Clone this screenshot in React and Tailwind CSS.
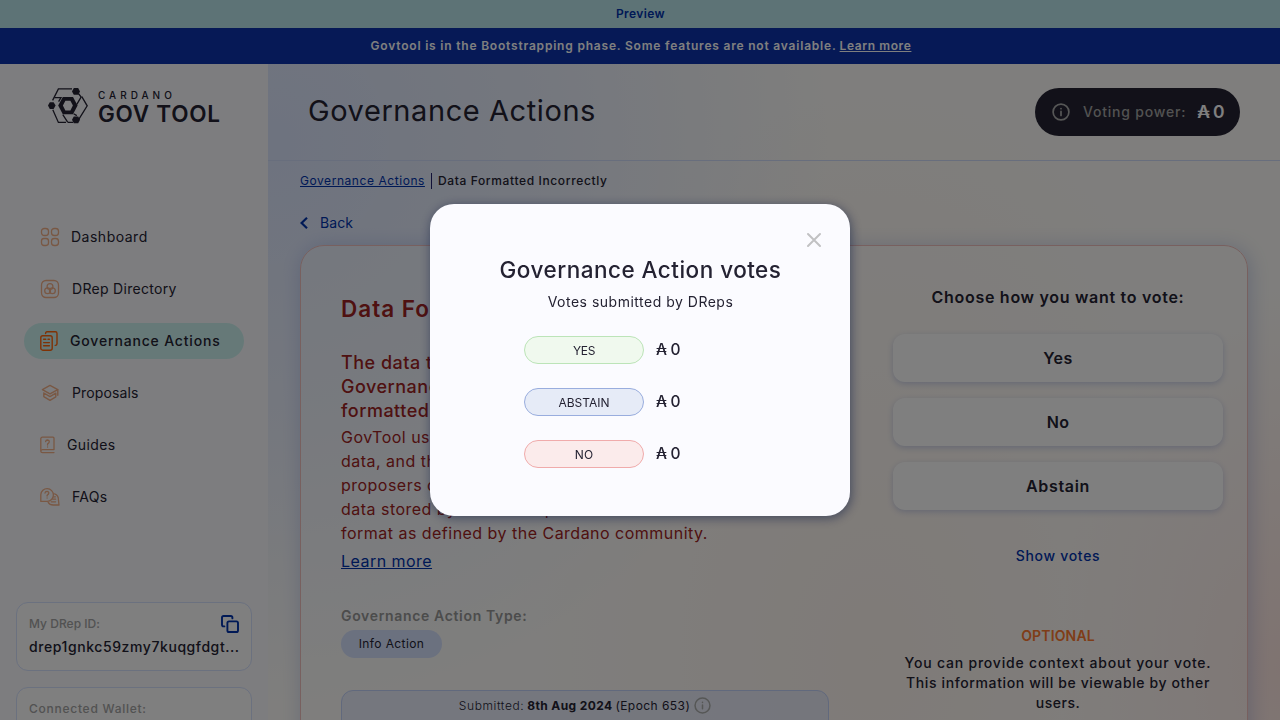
import React from "react";

const svgBase = { fill: "none", strokeLinecap: "round", strokeLinejoin: "round" };

function CardanoLogo() {
  return (
    <svg width="40" height="36" viewBox="0 0 40 36" className="mt-px shrink-0" fill="none" stroke="#242232" strokeWidth="1.3">
      <path d="M4.6 12.4 L10.4 0.9 H24" />
      <path d="M4.8 21.8 L10.4 34.4 H18 M20 34.4 H25" />
      <path d="M30.4 5.5 L33.2 9.2 M33.8 8.6 L39.2 17.8 L30.6 31.6" />
      <path d="M6.4 9.6 H13 L10.6 13.6 M33.2 8.8 L28.8 16.4 M14.8 26.6 L19.8 34.4" />
      <path d="M28.8 27.6 L25.6 25.8" />
      <polygon points="14.8,9 25,9 29.6,17.6 25,26.2 14.8,26.2 10.2,17.6" fill="#242232" stroke="none" />
      <polygon points="17.4,12.8 22.4,12.8 24.9,17.6 22.4,22.4 17.4,22.4 14.9,17.6" fill="#FBFBFF" stroke="none" />
      <polygon points="1.8,14.2 5.6,14.2 7.6,17.6 5.6,21 1.8,21 0,17.6" fill="#242232" stroke="none" />
      <polygon points="25.8,0 30.2,0 32,3.4 30.2,6.8 25.8,6.8 24,3.4" fill="#242232" stroke="none" />
      <polygon points="25.8,28.4 30.2,28.4 32,31.8 30.2,35.2 25.8,35.2 24,31.8" fill="#242232" stroke="none" />
    </svg>
  );
}

const faded = "#F2B088";

function DashboardIcon() {
  return (
    <svg width="20" height="20" viewBox="0 0 20 20" {...svgBase} stroke={faded} strokeWidth="1.3">
      <rect x="1.5" y="1.5" width="7" height="7" rx="2.8" />
      <rect x="11.5" y="1.5" width="7" height="7" rx="2.8" />
      <rect x="1.5" y="11.5" width="7" height="7" rx="2.4" />
      <rect x="11.5" y="11.5" width="7" height="7" rx="2.8" />
    </svg>
  );
}

function DirectoryIcon() {
  return (
    <svg width="20" height="20" viewBox="0 0 20 20" {...svgBase} stroke={faded} strokeWidth="1.3">
      <rect x="1.5" y="1.5" width="17" height="17" rx="4.5" />
      <circle cx="10" cy="7.6" r="2.9" />
      <circle cx="7.6" cy="11.8" r="2.9" />
      <circle cx="12.4" cy="11.8" r="2.9" />
    </svg>
  );
}

function ActionsIcon() {
  return (
    <svg width="18" height="20" viewBox="0 0 18 20" {...svgBase} stroke="#FF640A" strokeWidth="1.4">
      <rect x="0.8" y="4.8" width="11.4" height="14.4" rx="2" />
      <path d="M5.6 2.6 V2.2 Q5.6 0.8 7 0.8 H15.4 Q17 0.8 17 2.4 V12.8 Q17 14.4 15.2 14.4" />
      <path d="M3.6 8.2 H5.8 M8 8.2 H9.4 M3.6 11.6 H9.4 M3.6 14.8 H9.4" />
    </svg>
  );
}

function ProposalsIcon() {
  return (
    <svg width="20" height="20" viewBox="0 0 20 20" {...svgBase} stroke={faded} strokeWidth="1.4">
      <path d="M10 2.4 L17.8 6.6 L10 10.8 L2.4 6.6 Z" />
      <path d="M17.8 6.8 V12.2" />
      <path d="M3.8 10 L10 13.6 L15.8 10.2 M3.8 13.6 L10 17.3 L15.8 13.8 M3.8 10 V13.6 M15.8 10.2 V13.8" />
    </svg>
  );
}

function GuidesIcon() {
  return (
    <svg width="15" height="18" viewBox="0 0 15 18" {...svgBase} stroke={faded} strokeWidth="1.3">
      <path d="M14 13.6 V2.2 Q14 1.2 13 1.2 H2.4 Q0.8 1.2 0.8 2.8 V15 M14 13.6 H2.6 Q0.8 13.8 0.8 15.2 Q0.8 16.6 2.6 16.6 H14" />
      <path d="M5.6 5.6 Q5.8 4 7.5 4 Q9.4 4.2 9.3 5.8 Q9.2 7 7.6 7.8 V9 M7.6 11 V11.1" />
    </svg>
  );
}

function FaqsIcon() {
  return (
    <svg width="20" height="20" viewBox="0 0 20 20" {...svgBase} stroke={faded} strokeWidth="1.3">
      <path d="M0.8 14.4 V7.6 A6.3 6.4 0 1 1 7.2 14.4 Z" />
      <path d="M5 6 Q5.2 4.4 7 4.4 Q8.9 4.5 8.8 6.2 Q8.6 7.4 7.1 8.2 V9 M7.1 11 V11.1" />
      <path d="M14.6 6.8 A5.8 5.8 0 0 1 18.4 12.6 L19 18 H13.2 Q9.6 18 8.2 15.4 M13.6 9.8 H15.4 M12.8 12.2 H15.6 M11.2 14.8 H15.6" />
    </svg>
  );
}

function InfoIcon({ size, color, width }) {
  return (
    <svg width={size} height={size} viewBox="0 0 18 18" {...svgBase} stroke={color} strokeWidth={width} className="shrink-0">
      <circle cx="9" cy="9" r="7.9" />
      <path d="M9 8.4 V12.4 M9 5.6 V5.7" />
    </svg>
  );
}

const nav = [
  { label: "Dashboard", Icon: DashboardIcon, text: "pl-[11px] tracking-[0.5px]" },
  { label: "DRep Directory", Icon: DirectoryIcon, text: "pl-3 tracking-[0.3px]" },
  { label: "Governance Actions", Icon: ActionsIcon, text: "pl-3 font-medium tracking-[0.83px]", active: true },
  { label: "Proposals", Icon: ProposalsIcon, text: "pl-3 tracking-[0.12px]" },
  { label: "Guides", Icon: GuidesIcon, text: "pl-3 tracking-[0.4px]" },
  { label: "FAQs", Icon: FaqsIcon, text: "pl-3 tracking-[0.3px]" },
];

function Sidebar() {
  return (
    <aside className="flex w-[268px] shrink-0 flex-col bg-[#FBFBFF]">
      <div className="flex h-10 gap-[10px] pt-[23px] pl-12">
        <CardanoLogo />
        <div className="flex flex-col whitespace-nowrap">
          <span className="h-[15px] shrink-0 text-[10px] leading-4 font-medium tracking-[4px]">CARDANO</span>
          <span className="h-6 shrink-0 text-[22.5px] leading-6 font-semibold tracking-[0.75px]">GOV TOOL</span>
        </div>
      </div>
      <nav className="mt-[115px] flex flex-col gap-4 px-6">
        {nav.map(({ label, Icon, text, active }) => (
          <a key={label} className={`flex h-9 w-[220px] items-center rounded-full pl-4 text-sm whitespace-nowrap ${active ? "bg-[#CCF3F1]" : ""}`}>
            <Icon />
            <span className={text}>{label}</span>
          </a>
        ))}
      </nav>
      <div className="mt-[87px] flex flex-col gap-4 px-4">
        <div className="flex h-[69px] shrink-0 flex-col rounded-xl border border-[#D6E2FF] bg-[#FEFEFE] pt-3 pr-3 pl-3">
          <div className="flex h-5 justify-between">
            <span className="text-xs leading-[17px] font-medium tracking-[0.03px] text-[#A4A4A4]">My DRep ID:</span>
            <svg width="18" height="18" viewBox="0 0 18 18" {...svgBase} stroke="#0033AD" strokeWidth="1.9">
              <rect x="6.4" y="6.4" width="10.6" height="10.6" rx="1.6" />
              <path d="M3.4 11.4 H2.6 Q1 11.4 1 9.8 V2.6 Q1 1 2.6 1 H9.8 Q11.4 1 11.4 2.6 V3.4" />
            </svg>
          </div>
          <span className="mt-[2px] text-sm leading-5 font-medium tracking-[0.58px] whitespace-nowrap">drep1gnkc59zmy7kuqgfdgt...</span>
        </div>
        <div className="flex h-[69px] shrink-0 items-start rounded-xl border border-[#D6E2FF] bg-[#FEFEFE] px-3 pt-3">
          <span className="text-xs leading-[18px] font-medium tracking-[0.74px] text-[#A4A4A4]">Connected Wallet:</span>
        </div>
      </div>
    </aside>
  );
}

function VoteButton({ children, tracking }) {
  return (
    <button className={`h-12 w-full rounded-xl bg-white pb-px text-base font-semibold shadow-[0_2px_6px_0_rgba(0,51,173,0.2)] ${tracking}`}>
      {children}
    </button>
  );
}

function ActionCard() {
  return (
    <section className="flex h-[620px] shrink-0 rounded-3xl border border-[#F0C0BE] bg-[rgba(255,255,255,0.3)] shadow-[2px_2px_20px_0_rgba(0,51,173,0.2)]">
      <div className="flex w-[568px] shrink-0 flex-col items-start pt-12 pr-10 pl-10 text-[#9E2323]">
        <h2 className="text-[22.5px] leading-[30px] font-semibold tracking-[1px] whitespace-nowrap">Data Formatted Incorrectly</h2>
        <p className="mt-[27px] text-lg leading-6 font-medium tracking-[0.5px] whitespace-nowrap">
          The data that was originally used when this<br />
          Governance Action was created has been<br />
          formatted incorrectly.
        </p>
        <p className="mt-[2px] text-base leading-6 tracking-[0.48px] whitespace-nowrap">
          GovTool uses external sources for Governance Action<br />
          data, and these sources are maintained by the<br />
          proposers of the actions. This error means that the<br />
          data stored by the developer is not in the correct<br />
          format as defined by the Cardano community.
        </p>
        <a className="mt-1 text-base leading-6 tracking-[0.46px] text-[#0033AD] underline">Learn more</a>
        <div className="mt-[33px] text-sm leading-5 font-semibold tracking-[0.66px] text-[#989898]">Governance Action Type:</div>
        <div className="mt-1 flex h-7 w-[101px] items-center justify-center rounded-full bg-[#D6E2FF] text-xs tracking-[0.4px] whitespace-nowrap text-[#242232]">
          Info Action
        </div>
        <div className="mt-8 flex h-[120px] w-[488px] shrink-0 items-start justify-center rounded-xl border border-[#C3D2FA] bg-[rgba(214,226,255,0.5)] pt-1.5 text-xs leading-[18px] whitespace-nowrap text-[#242232]">
          <span className="pr-[3px] font-light tracking-[0.6px]">Submitted:</span>
          <span className="pr-[3px] font-bold tracking-[0.38px]">8th Aug 2024</span>
          <span className="pr-[4px] tracking-[0.44px]">(Epoch 653)</span>
          <InfoIcon size={17} color="#ADAEAD" width={1.6} />
        </div>
      </div>
      <div className="flex min-w-0 flex-1 flex-col items-center pt-[39px] pr-6 pl-6">
        <h3 className="text-base leading-6 font-semibold tracking-[0.71px] whitespace-nowrap">Choose how you want to vote:</h3>
        <div className="mt-[25px] flex w-full flex-col gap-4">
          <VoteButton tracking="tracking-[0.4px]">Yes</VoteButton>
          <VoteButton tracking="tracking-[0.4px]">No</VoteButton>
          <VoteButton tracking="tracking-[0.67px]">Abstain</VoteButton>
        </div>
        <a className="mt-9 text-sm leading-5 font-medium tracking-[0.7px] text-[#0033AD]">Show votes</a>
        <div className="mt-[60px] text-sm leading-5 font-semibold tracking-[0.15px] text-[#FF7A30]">OPTIONAL</div>
        <p className="mt-[7px] text-center text-sm leading-5 font-medium whitespace-nowrap">
          <span className="tracking-[0.8px]">You can provide context about your vote.</span><br />
          <span className="tracking-[0.62px]">This information will be viewable by other</span><br />
          <span className="tracking-[0.5px]">users.</span>
        </p>
      </div>
    </section>
  );
}

function VotePill({ label, style }) {
  return (
    <div className="flex h-7 items-center">
      <div className={`flex h-7 w-[120px] items-center justify-center rounded-full border pt-px text-xs ${style}`}>{label}</div>
      <span className="pb-px pl-3 text-[15.5px] leading-[26px] font-medium tracking-[-0.3px]">₳ 0</span>
    </div>
  );
}

function VotesModal() {
  return (
    <div className="fixed inset-0 flex items-center justify-center bg-[rgba(0,0,0,0.5)]">
      <div className="relative flex h-[312px] w-[420px] flex-col items-center rounded-3xl bg-[#FBFBFF] pt-[50px] shadow-[1px_2px_11px_0_rgba(0,18,61,0.5)]">
        <svg className="absolute top-7 right-6" width="24" height="16" viewBox="0 0 24 16" fill="none" stroke="#C1C1C3" strokeWidth="2" strokeLinecap="round">
          <path d="M6 2 L18 14 M18 2 L6 14" />
        </svg>
        <h1 className="pl-px text-[22.5px] leading-8 font-medium tracking-[0.48px] whitespace-nowrap">Governance Action votes</h1>
        <p className="mt-[6px] pl-px text-sm leading-5 tracking-[0.5px]">Votes submitted by DReps</p>
        <div className="mt-6 flex w-[232px] flex-col gap-6">
          <VotePill label="YES" style="border-[#BCE4B8] bg-[#F0F9EE] tracking-[-0.3px]" />
          <VotePill label="ABSTAIN" style="border-[#99ADDE] bg-[#E6EBF7] tracking-[-0.02px]" />
          <VotePill label="NO" style="border-[#F0ABAB] bg-[#FBEBEB] tracking-[0.2px]" />
        </div>
      </div>
    </div>
  );
}

export default function App() {
  return (
    <div className="flex h-screen w-full flex-col overflow-hidden bg-white font-['Inter','Open_Sans',sans-serif] text-[#242232]">
      <div className="flex h-7 shrink-0 items-center justify-center bg-[#BBE6EC] pl-px text-xs font-semibold tracking-[0.39px] text-[#0033AD]">Preview</div>
      <div className="flex h-9 shrink-0 items-center justify-center bg-[#0C32AD] pl-[2px] text-xs font-semibold whitespace-nowrap text-white">
        <span className="tracking-[0.8px]">Govtool is in the Bootstrapping phase. Some features are not available.</span>
        <a className="pl-[3px] tracking-[0.6px] underline">Learn more</a>
      </div>
      <div className="flex min-h-0 flex-1">
        <Sidebar />
        <main className="flex min-w-0 flex-1 flex-col bg-[radial-gradient(ellipse_560px_560px_at_0%_12%,rgba(214,226,255,0.85),rgba(214,226,255,0.5)_50%,transparent_100%),radial-gradient(ellipse_220px_380px_at_100%_92%,rgba(255,224,218,0.75),transparent),radial-gradient(ellipse_380px_560px_at_60%_90%,rgba(255,239,228,0.75),transparent),linear-gradient(#FEFDFA,#FEFDFA)]">
          <header className="flex h-[97px] shrink-0 items-center justify-between border-b border-[#D0DCFA] pr-10 pl-10">
            <h1 className="pb-[2px] text-[29px] tracking-[0.58px] whitespace-nowrap">Governance Actions</h1>
            <div className="flex h-12 w-[205px] items-center rounded-full bg-[#242232] pl-[17px] whitespace-nowrap">
              <InfoIcon size={18} color="#ADAEAD" width={1.7} />
              <span className="pl-[13px] text-sm font-medium tracking-[0.8px] text-[#A5A6A5]">Voting power:</span>
              <span className="pl-[11px] text-[17.5px] font-semibold tracking-[-0.7px] text-white">₳ 0</span>
            </div>
          </header>
          <div className="flex min-h-0 flex-1 flex-col px-8">
            <div className="mt-3 flex h-4 shrink-0 items-center text-xs whitespace-nowrap">
              <a className="tracking-[0.56px] text-[#0033AD] underline">Governance Actions</a>
              <span className="mr-[6px] ml-[6px] h-4 w-px bg-[#242270]" />
              <span className="font-medium tracking-[0.63px]">Data Formatted Incorrectly</span>
            </div>
            <div className="mt-6 flex h-5 shrink-0 items-center text-sm text-[#0033AD]">
              <svg width="8" height="12" viewBox="0 0 8 12" fill="none" stroke="#0033AD" strokeWidth="2.2">
                <path d="M7 0.8 L1.6 6 L7 11.2" />
              </svg>
              <span className="pl-3 tracking-[0.1px]">Back</span>
            </div>
            <div className="h-3 shrink-0" />
            <ActionCard />
          </div>
        </main>
      </div>
      <VotesModal />
    </div>
  );
}
